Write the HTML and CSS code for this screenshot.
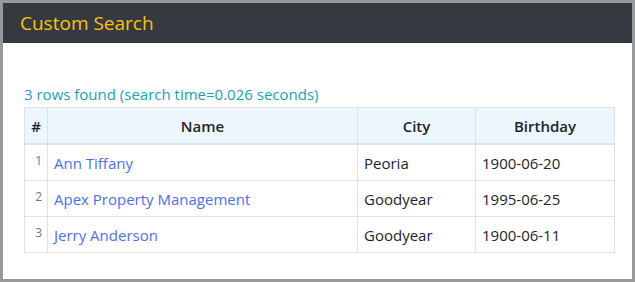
FILE: index.html
```html
<!DOCTYPE html>
<html>
<head>
    <title>Custom Search</title>
    <link rel="stylesheet" href="styles.css">
</head>
<body>
    <div class="frame">
        <div class="topbar">Custom Search</div>
        <div class="content">
            <div class="found">3 rows found (search time=0.026 seconds)</div>
            <table class="results">
                <thead>
                    <tr>
                        <th class="num">#</th>
                        <th class="name">Name</th>
                        <th class="city">City</th>
                        <th>Birthday</th>
                    </tr>
                </thead>
                <tbody>
                    <tr>
                        <td class="num">1</td>
                        <td><a href="#">Ann Tiffany</a></td>
                        <td>Peoria</td>
                        <td>1900-06-20</td>
                    </tr>
                    <tr>
                        <td class="num">2</td>
                        <td><a href="#">Apex Property Management</a></td>
                        <td>Goodyear</td>
                        <td>1995-06-25</td>
                    </tr>
                    <tr>
                        <td class="num">3</td>
                        <td><a href="#">Jerry Anderson</a></td>
                        <td>Goodyear</td>
                        <td>1900-06-11</td>
                    </tr>
                </tbody>
            </table>
        </div>
    </div>
</body>
</html>
```

FILE: styles.css
```css
html, body { margin: 0; padding: 0; }
body { font-family: "Open Sans", "Noto Sans", sans-serif; color: #212529; background: #fff; }
.frame { box-sizing: border-box; width: 635px; height: 282px; border: 3px solid #999; background: #fff; }
.topbar { height: 40px; background-color: #343a40; color: #ffc107; font-size: 19px; line-height: 40px; padding-left: 17px; }
.content { padding: 41px 17px 0 21px; }
.found { color: #17a2b8; font-size: 15px; line-height: 21px; margin-bottom: 2px; }
.results { width: 100%; border-collapse: collapse; font-size: 15px; }
.results th, .results td { border: 1px solid #dee2e6; padding: 6px 6px 5px; line-height: 24px; text-align: left; }
.results th { background-color: #eef6fd; font-weight: 600; text-align: center; border-bottom-width: 2px; }
.results td.num { font-size: 12px; color: #777; text-align: right; vertical-align: top; padding: 4px 5px 0 5px; }
.results th.num { width: 10px; }
.results th.name { width: 297px; }
.results th.city { width: 105px; }
.results a { color: #4c6ef5; text-decoration: none; }
```
